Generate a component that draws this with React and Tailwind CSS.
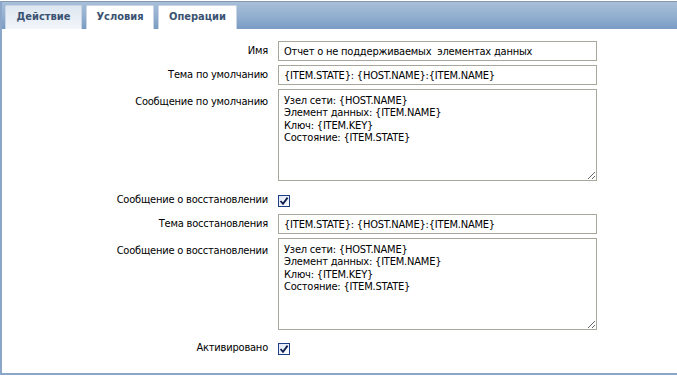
import React from "react";

const font = { fontFamily: '"DejaVu Sans Condensed", "DejaVu Sans", Verdana, sans-serif' };

function Check() {
  return (
    <svg width="12" height="12" viewBox="0 0 12 12" className="block">
      <defs>
        <linearGradient id="cb" x1="0" y1="0" x2="1" y2="1">
          <stop offset="0" stopColor="#dfe7f3" />
          <stop offset="1" stopColor="#ffffff" />
        </linearGradient>
      </defs>
      <rect x="0.5" y="0.5" width="11" height="11" fill="url(#cb)" stroke="#1c3f86" />
      <path d="M2.5 6 L5 8.8 L9.6 2.6" fill="none" stroke="#0d1f4d" strokeWidth="1.8" />
    </svg>
  );
}

function Label({ children, top }) {
  return (
    <div className={`w-[266px] shrink-0 text-right text-[11px] tracking-[-0.2px] text-black ${top ? "pt-[5px]" : ""}`}>
      {children}
    </div>
  );
}

const inputCls =
  "w-[319px] h-[20px] border border-[#a9a69c] bg-white px-[5px] text-[11px] tracking-[-0.2px] text-black outline-none";
const areaCls =
  "w-[319px] h-[92px] border border-[#a9a69c] bg-white px-[5px] pt-[5px] pb-[3px] text-[11px] tracking-[-0.2px] leading-[12.3px] text-black outline-none";

const msg = "Узел сети: {HOST.NAME}\nЭлемент данных: {ITEM.NAME}\nКлюч: {ITEM.KEY}\nСостояние: {ITEM.STATE}";

export default function App() {
  const tabs = [
    { t: "Действие", w: "w-[77px]" },
    { t: "Условия", w: "w-[68px]" },
    { t: "Операции", w: "w-[79px]" },
  ];
  return (
    <div className="w-[677px] h-[376px] bg-white pt-px overflow-hidden" style={font}>
      <div className="h-[374px] border-l-2 border-b-2 border-[#8ba6c8] flex flex-col">
        {/* tabs bar */}
        <div className="h-[28px] border-t border-[#8396b2] bg-gradient-to-b from-[#a8bfd8] via-[#93b0d0] to-[#7a9cc3] flex items-end gap-[4px] pl-[3px]">
          {tabs.map((tab, i) => (
            <div
              key={tab.t}
              className={`${tab.w} h-[24px] flex items-center justify-center text-[11px] font-bold text-[#3b5372] rounded-t-[2px] border border-b-0 border-[#c9d6e5] ${
                i === 0 ? "bg-gradient-to-b from-[#dde6f0] to-[#f3f6fa]" : "bg-white"
              }`}
            >
              {tab.t}
            </div>
          ))}
        </div>

        {/* form */}
        <div className="flex flex-col pt-[12px]">
          <div className="flex items-center gap-[10px]">
            <Label>Имя</Label>
            <input className={inputCls} readOnly value="Отчет о не поддерживаемых  элементах данных" />
          </div>
          <div className="flex items-center gap-[10px] mt-[4px]">
            <Label>Тема по умолчанию</Label>
            <input className={inputCls} readOnly value="{ITEM.STATE}: {HOST.NAME}:{ITEM.NAME}" />
          </div>
          <div className="flex items-start gap-[10px] mt-[4px]">
            <Label top>Сообщение по умолчанию</Label>
            <textarea className={areaCls} readOnly value={msg} />
          </div>
          <div className="flex items-center gap-[10px] mt-[13px] h-[13px]">
            <Label>Сообщение о восстановлении</Label>
            <Check />
          </div>
          <div className="flex items-center gap-[10px] mt-[7px]">
            <Label>Тема восстановления</Label>
            <input className={inputCls} readOnly value="{ITEM.STATE}: {HOST.NAME}:{ITEM.NAME}" />
          </div>
          <div className="flex items-start gap-[10px] mt-[4px]">
            <Label top>Сообщение о восстановлении</Label>
            <textarea className={areaCls} readOnly value={msg} />
          </div>
          <div className="flex items-center gap-[10px] mt-[12px] h-[13px]">
            <Label>Активировано</Label>
            <Check />
          </div>
        </div>
      </div>
    </div>
  );
}
